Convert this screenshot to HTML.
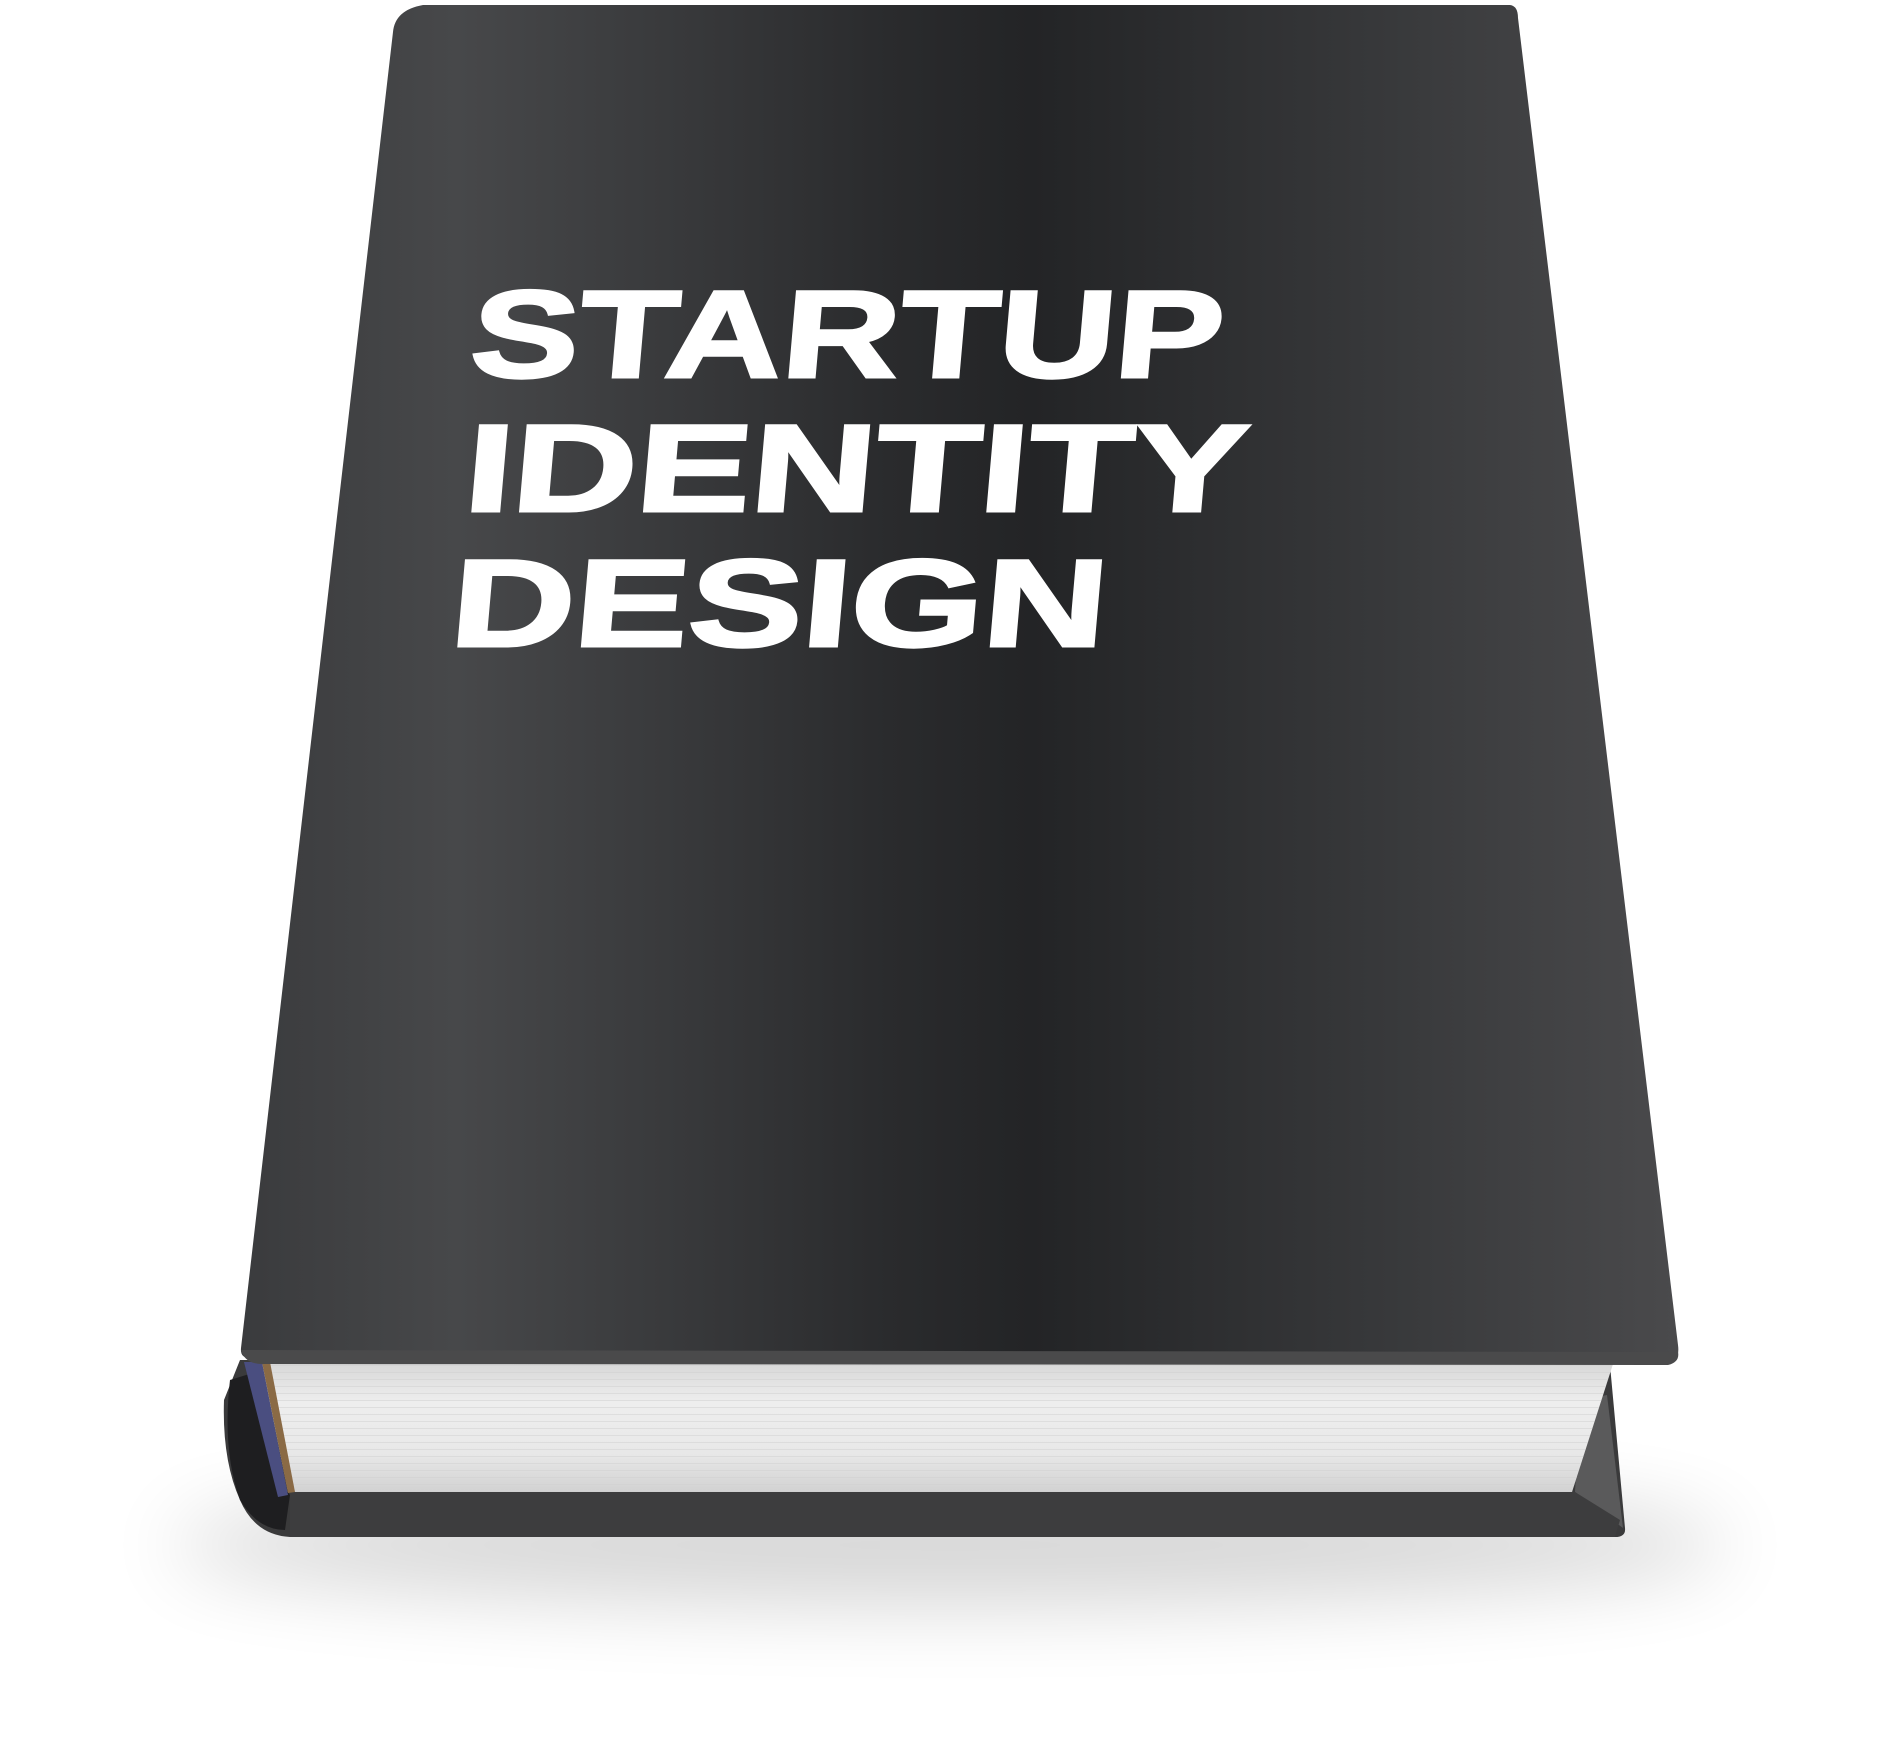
<!DOCTYPE html>
<html><head><meta charset="utf-8"><style>
html,body{margin:0;padding:0;background:#fff;}
svg{display:block}
</style></head><body>
<svg width="1900" height="1755" viewBox="0 0 1900 1755" xmlns="http://www.w3.org/2000/svg">
<defs>
<linearGradient id="cov" x1="0" x2="1" y1="0" y2="0">
<stop offset="0" stop-color="#3a3b3d"/>
<stop offset="0.15" stop-color="#47484a"/>
<stop offset="0.45" stop-color="#2a2b2d"/>
<stop offset="0.55" stop-color="#232426"/>
<stop offset="0.8" stop-color="#38393b"/>
<stop offset="1" stop-color="#4a4a4c"/>
</linearGradient>
<linearGradient id="pg" x1="0" x2="0" y1="0" y2="1">
<stop offset="0" stop-color="#d8d8d8"/>
<stop offset="0.3" stop-color="#eeeeee"/>
<stop offset="0.7" stop-color="#e8e8e8"/>
<stop offset="1" stop-color="#d2d2d2"/>
</linearGradient>
<pattern id="lines" width="10" height="7" patternUnits="userSpaceOnUse">
<rect width="10" height="1" fill="#cfcfcf" opacity="0.5"/>
</pattern>
<filter id="blur" x="-20%" y="-80%" width="140%" height="260%"><feGaussianBlur stdDeviation="40"/></filter>
</defs>
<!-- shadow -->
<ellipse cx="950" cy="1545" rx="780" ry="60" fill="#000" opacity="0.16" filter="url(#blur)"/>
<!-- back cover -->
<path d="M240 1360 L1610 1365 L1625 1528 Q1626 1537 1615 1537 L290 1537 Q255 1535 240 1500 Q222 1460 224 1400 Z" fill="#3a3a3b"/>
<path d="M1580 1400 L1607 1395 L1623 1528 L1575 1492 Z" fill="#5a5a5b"/>
<path d="M290 1492 L1575 1492 L1620 1520 L1615 1537 L290 1537 Z" fill="#3d3d3e"/>
<path d="M230 1380 Q222 1450 240 1500 Q258 1530 285 1530 L290 1495 Q262 1460 262 1370 Z" fill="#1e1e20"/>
<!-- pages -->
<path d="M262 1364 L1613 1364 L1572 1492 L288 1492 Z" fill="url(#pg)"/>
<path d="M262 1364 L1613 1364 L1572 1492 L288 1492 Z" fill="url(#lines)"/>
<path d="M244 1362 L262 1362 L288 1495 L278 1497 Z" fill="#4a4e80"/>
<path d="M262 1362 L270 1362 L295 1492 L288 1493 Z" fill="#8a6a45"/>
<!-- cover -->
<path d="M423 5 L1510 5 Q1518 6 1518 18 L1678 1345 Q1680 1360 1670 1360 L250 1358 Q240 1358 241 1348 L393 32 Q395 10 423 5 Z" fill="url(#cov)"/>
<path d="M241 1350 L1678 1352 Q1680 1362 1668 1365 L262 1364 Q245 1364 241 1350 Z" fill="#4a4a4b"/>
<g fill="#ffffff" stroke="#ffffff" stroke-width="3" font-family="'Liberation Sans', sans-serif" font-weight="bold" font-size="124">
<text transform="translate(468 377) skewX(-5)" textLength="752" lengthAdjust="spacingAndGlyphs">STARTUP</text>
<text transform="translate(462 511) skewX(-5)" textLength="782" lengthAdjust="spacingAndGlyphs">IDENTITY</text>
<text transform="translate(448 646) skewX(-5)" textLength="656" lengthAdjust="spacingAndGlyphs">DESIGN</text>
</g>
</svg>
</body></html>
